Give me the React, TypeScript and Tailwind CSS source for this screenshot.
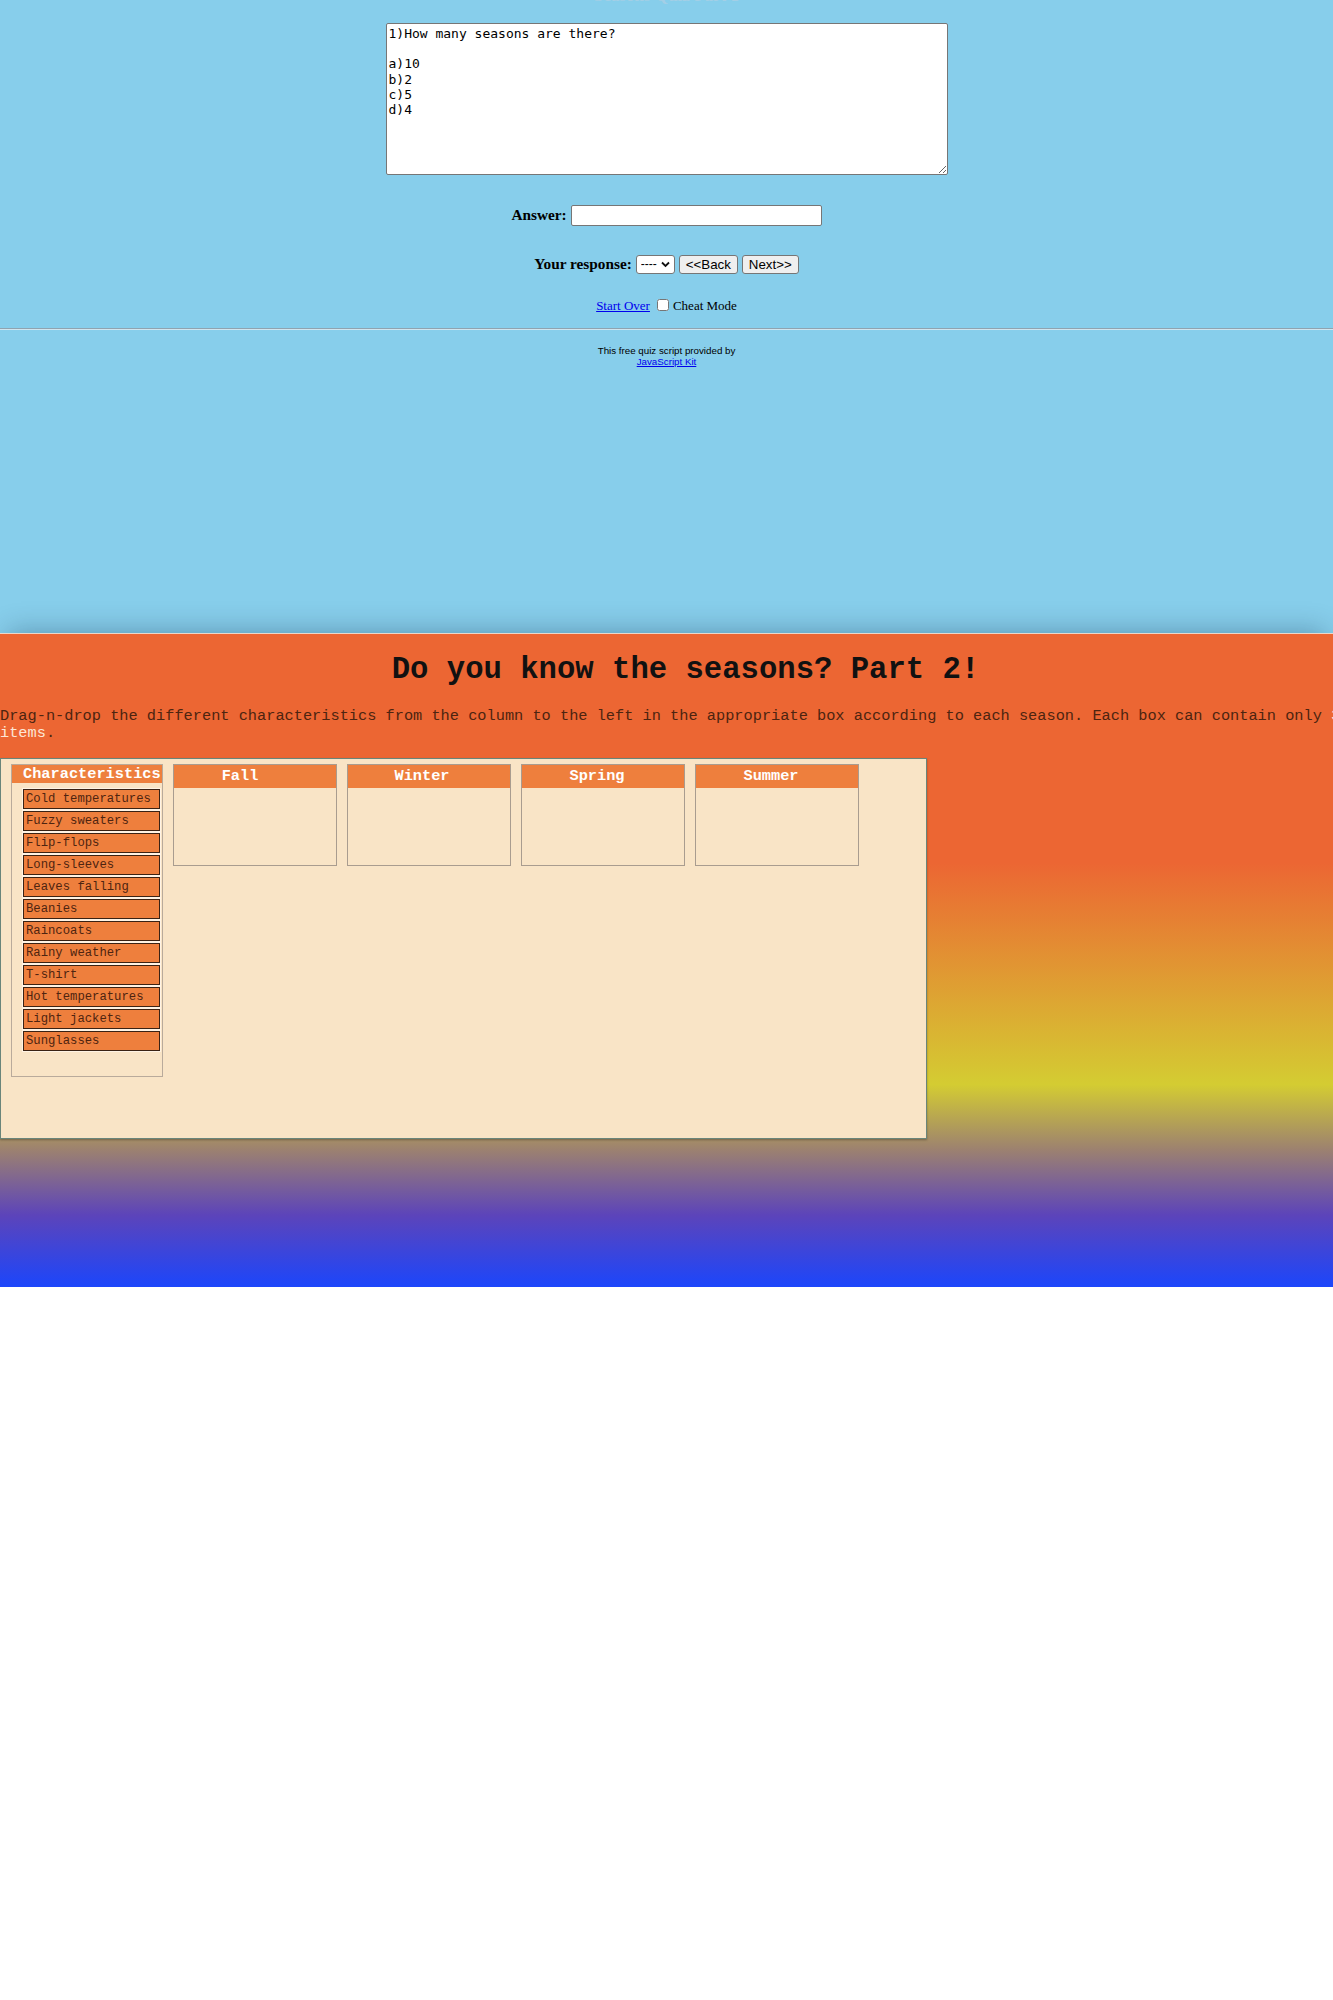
import React from "react";

const serif = { fontFamily: '"Liberation Serif", "Times New Roman", serif' };
const sans = { fontFamily: '"Liberation Sans", Arial, sans-serif' };
const mono = { fontFamily: '"Liberation Mono", "Courier New", monospace' };
const dejavu = { fontFamily: '"DejaVu Sans Mono", monospace' };

const items = [
  "Cold temperatures",
  "Fuzzy sweaters",
  "Flip-flops",
  "Long-sleeves",
  "Leaves falling",
  "Beanies",
  "Raincoats",
  "Rainy weather",
  "T-shirt",
  "Hot temperatures",
  "Light jackets",
  "Sunglasses",
];

function SeasonBox({ name, pad }: { name: string; pad: string }) {
  return (
    <div className="flex h-[102px] w-[164px] shrink-0 flex-col border border-[#a99c8f]">
      <div
        className={`h-[23px] bg-[#ee7f3d] text-center text-[15.3px] font-bold leading-[23px] text-white ${pad}`}
        style={mono}
      >
        {name}
      </div>
    </div>
  );
}

export default function App() {
  return (
    <div className="w-full bg-white">
      {/* Top quiz section */}
      <div className="flex h-[633px] w-full flex-col items-center bg-[#87ceeb] text-black" style={serif}>
        <div className="h-[23px] w-full overflow-hidden">
          <p className="-mt-[13px] text-center text-[17px] font-bold leading-[18px] text-[#a3cfe6]">
            Seasons Quiz Part 1
          </p>
        </div>
        <textarea
          readOnly
          className="block h-[152px] w-[562px] resize rounded-[2px] border border-[#767676] bg-white px-[2px] py-[2px] text-[13px] leading-[15.2px] text-black"
          style={dejavu}
          defaultValue={"1)How many seasons are there?\n\na)10\nb)2\nc)5\nd)4"}
        />
        <div className="mt-[29px] flex items-center gap-[4px]">
          <span className="text-[15.3px] font-bold">Answer:</span>
          <input
            type="text"
            className="h-[21px] w-[251px] rounded-[2px] border border-[#767676] bg-white"
          />
        </div>
        <div className="mt-[26px] flex items-center gap-[4px]">
          <span className="text-[15.3px] font-bold">Your response:</span>
          <div className="relative h-[19px] w-[39px]">
            <select
              className="block h-[19px] w-[39px] appearance-none rounded-[3px] border border-[#767676] bg-white pl-[4px] text-[12px] leading-[17px] text-black"
              style={sans}
              defaultValue="----"
            >
              <option>----</option>
              <option>a</option>
              <option>b</option>
              <option>c</option>
              <option>d</option>
            </select>
            <svg
              className="pointer-events-none absolute right-[5px] top-[6px]"
              width="9"
              height="7"
              viewBox="0 0 9 7"
            >
              <path d="M1 1.5 L4.5 5 L8 1.5" fill="none" stroke="#111" strokeWidth="1.8" />
            </svg>
          </div>
          <button
            className="h-[19px] w-[59px] rounded-[3px] border border-[#767676] bg-[#efefef] text-[13.33px] leading-[17px] text-black"
            style={sans}
          >
            {"<<Back"}
          </button>
          <button
            className="h-[19px] w-[57px] rounded-[3px] border border-[#767676] bg-[#efefef] text-[13.33px] leading-[17px] text-black"
            style={sans}
          >
            {"Next>>"}
          </button>
        </div>
        <div className="mt-[22px] flex items-center text-[13px] leading-[15px]">
          <a href="#" className="text-[#0000ee] underline">
            Start Over
          </a>
          <input type="checkbox" className="ml-[7px] mr-[4px] h-[12px] w-[12px]" />
          <span>Cheat Mode</span>
        </div>
        <div className="mt-[15px] h-[2px] w-full border-t border-b border-t-[#8fa3b0] border-b-[#cfe6f1]" />
        <div className="mt-[15px] text-center text-[9.75px] leading-[11px] text-black" style={sans}>
          <div>This free quiz script provided by</div>
          <a href="#" className="text-[#0000ee] underline">
            JavaScript Kit
          </a>
        </div>
      </div>

      {/* Drag and drop section */}
      <div className="h-[654px] w-full overflow-hidden border-t border-[#ecd7c9] bg-[linear-gradient(180deg,#ec6633_0%,#ec6633_35%,#d4cc32_69%,#9c8170_79%,#5c44ba_89%,#1c46fb_100%)] shadow-[0_-10px_26px_-8px_rgba(0,30,60,0.3)]">
        <div className="w-[1371px]" style={mono}>
          <h1 className="pt-[19px] text-center text-[30.6px] font-bold leading-[35px] text-[#111]">
            Do you know the seasons? Part 2!
          </h1>
          <p className="mt-[20px] text-[15.3px] leading-[17.4px] text-[#4d2410]">
            Drag-n-drop the different characteristics from the column to the left in the appropriate box
            according to each season. Each box can contain only{" "}
            <span className="text-[#fde6d6]">3 items</span>.
          </p>
          <div className="mt-[15px] h-[381px] w-[927px] border border-[#6a857a] bg-[#f9e4c6] pl-[10px] pt-[5px] shadow-[0_1px_2px_rgba(0,0,0,0.3)]">
            <div className="flex items-start gap-[10px]">
              <div className="w-[152px] shrink-0 border border-[#b9aa9b] pb-[25px]">
                <div className="h-[18px] whitespace-nowrap bg-[#ee7f3d] pl-[11px] text-[15.3px] font-bold leading-[18px] text-white">
                  Characteristics
                </div>
                <div className="mt-[6px] flex flex-col gap-[2px] pl-[11px] pr-[1px]">
                  {items.map((it) => (
                    <div
                      key={it}
                      className="flex h-[20px] w-[137px] items-center border border-[#3a2214] bg-[#ee7f3d] px-[2px] text-[12.24px] leading-[14px] text-[#4e2410] shadow-[0_0_0_1px_#fff3e4]"
                    >
                      {it}
                    </div>
                  ))}
                </div>
              </div>
              <SeasonBox name="Fall" pad="pr-[30px]" />
              <SeasonBox name="Winter" pad="pr-[14px]" />
              <SeasonBox name="Spring" pad="pr-[12px]" />
              <SeasonBox name="Summer" pad="pr-[12px]" />
            </div>
          </div>
        </div>
      </div>
      <div className="h-[713px] w-full bg-white" />
    </div>
  );
}
